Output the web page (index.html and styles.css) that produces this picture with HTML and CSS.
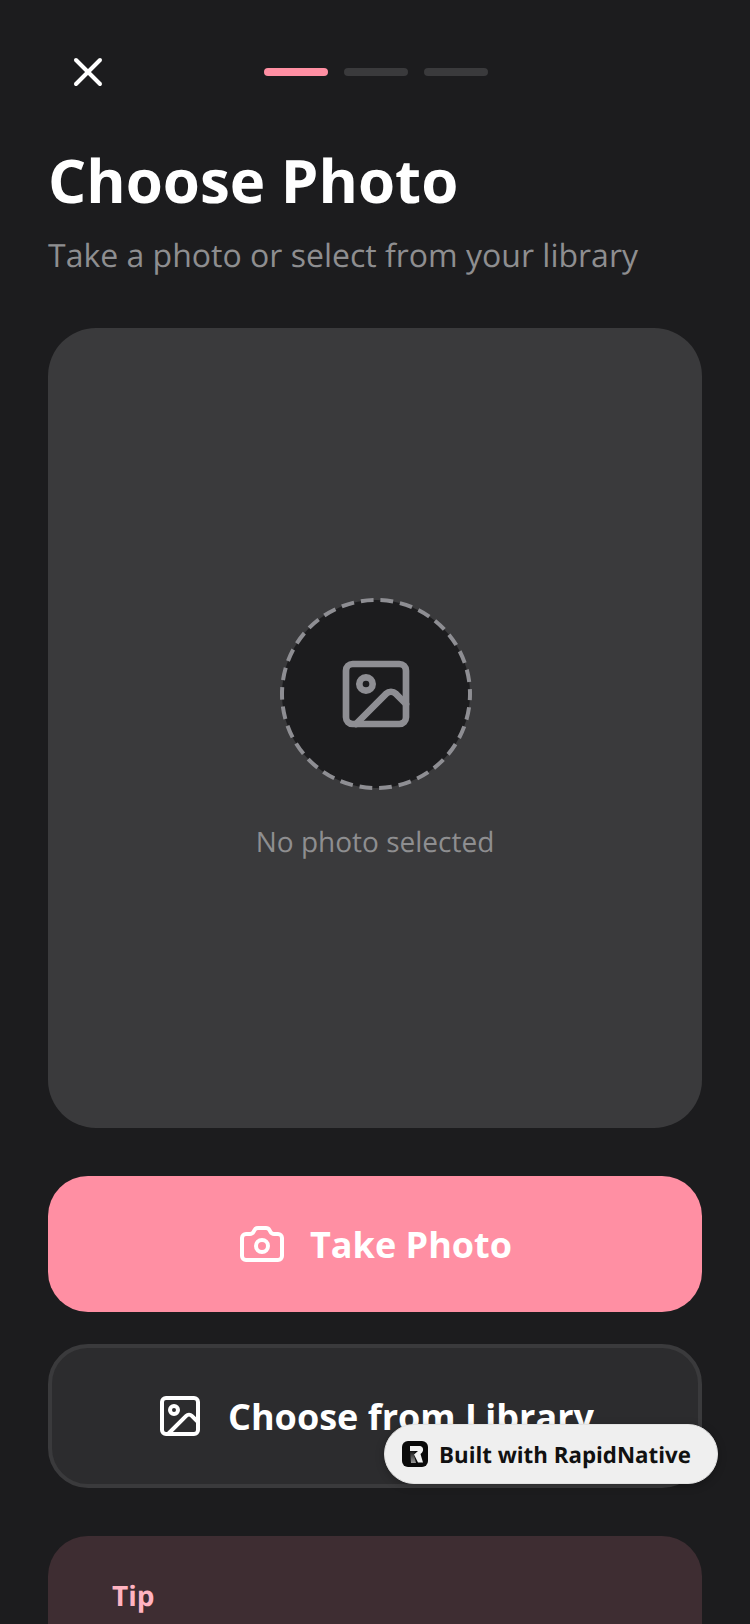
FILE: index.html
```html
<!DOCTYPE html>
<html lang="en">
	<head>
		<meta charset="UTF-8" />
		<meta name="viewport" content="width=device-width, initial-scale=1.0" />
		<title>Choose Photo</title>
		<link rel="stylesheet" href="styles.css">
	</head>

	<body>
		<div id="screen">
			<div class="topBar">
				<button class="closeBtn" aria-label="Close">
					<svg width="48" height="48" viewBox="0 0 24 24" fill="none" stroke="#fff" stroke-width="2" stroke-linecap="round" stroke-linejoin="round">
						<path d="M18 6 6 18" />
						<path d="m6 6 12 12" />
					</svg>
				</button>
				<div class="steps">
					<span class="step active"></span>
					<span class="step"></span>
					<span class="step"></span>
				</div>
			</div>

			<h1 class="title">Choose Photo</h1>
			<p class="subtitle">Take a photo or select from your library</p>

			<div class="preview">
				<svg class="emptyCircle" width="192" height="192" viewBox="0 0 192 192" fill="none">
					<circle cx="96" cy="96" r="94" fill="#1c1c1e" stroke="#8e8e93" stroke-width="4" stroke-dasharray="12.700 7" stroke-dashoffset="6.350" />
					<!-- image icon -->
					<g transform="translate(56 56) scale(3.333)" stroke="#8e8e93" stroke-width="2" stroke-linecap="round" stroke-linejoin="round">
						<rect x="3" y="3" width="18" height="18" rx="2" />
						<circle cx="9" cy="9" r="2" />
						<path d="m21 15-3.086-3.086a2 2 0 0 0-2.828 0L6 21" />
					</g>
				</svg>
				<p class="emptyText">No photo selected</p>
			</div>

			<button class="actionBtn primary">
				<svg width="48" height="48" viewBox="0 0 24 24" fill="none" stroke="#fff" stroke-width="2" stroke-linecap="round" stroke-linejoin="round">
					<path d="M13.997 4a2 2 0 0 1 1.760 1.050l.486.900A2 2 0 0 0 18.003 7H20a2 2 0 0 1 2 2v9a2 2 0 0 1-2 2H4a2 2 0 0 1-2-2V9a2 2 0 0 1 2-2h1.997a2 2 0 0 0 1.759-1.048l.489-.904A2 2 0 0 1 10.004 4z" />
					<circle cx="12" cy="13" r="3" />
				</svg>
				<span>Take Photo</span>
			</button>

			<button class="actionBtn secondary">
				<svg width="48" height="48" viewBox="0 0 24 24" fill="none" stroke="#fff" stroke-width="2" stroke-linecap="round" stroke-linejoin="round">
					<rect x="3" y="3" width="18" height="18" rx="2" />
					<circle cx="9" cy="9" r="2" />
					<path d="m21 15-3.086-3.086a2 2 0 0 0-2.828 0L6 21" />
				</svg>
				<span>Choose from Library</span>
			</button>

			<div class="tipCard">
				<h3 class="tipTitle">Tip</h3>
			</div>

			<div class="builtBadge">
				<svg width="26" height="26" viewBox="0 0 26 26">
					<defs>
						<linearGradient id="stemFade" x1="0" y1="0" x2="0" y2="1">
							<stop offset="0" stop-color="#111" />
							<stop offset="1" stop-color="#999" />
						</linearGradient>
					</defs>
					<rect width="26" height="26" rx="6" fill="#0a0a0a" />
					<path d="M8 10h5l-1 4 2 8H9Z" fill="url(#stemFade)" />
					<path d="M8 5h9c3 0 4.500 2 4 4.500-.3 1.500-1.300 2.800-2.500 3.500l2.500 8.500h-5l-4-8 4-3.500H8Z" fill="#f2f2f2" />
				</svg>
				<span>Built with RapidNative</span>
			</div>
		</div>
	</body>
</html>
```

FILE: styles.css
```css
* {
	margin: 0;
	padding: 0;
	box-sizing: border-box;
}

html, body {
	width: 100%;
	height: 100%;
	overflow: hidden;
}

body {
	background-color: #1c1c1e;
	font-family: "Open Sans", "Noto Sans", sans-serif;
	text-rendering: geometricPrecision;
}

#screen {
	position: relative;
	height: 1624px;
	padding: 48px 48px 0;
	overflow: hidden;
}

.topBar {
	display: grid;
	grid-template-columns: 1fr auto 1fr;
	align-items: center;
	height: 48px;
}

.closeBtn {
	width: 48px;
	height: 48px;
	margin-left: 16px;
	background: none;
	border: none;
}

.steps {
	display: flex;
	gap: 16px;
	margin-left: 2px;
}

.step {
	width: 64px;
	height: 8px;
	border-radius: 4px;
	background-color: #3a3a3c;
}

.step.active {
	background-color: #ff8fa3;
}

.title {
	margin-top: 48px;
	font-size: 60px;
	line-height: 72px;
	font-weight: 700;
	color: #fff;
}

.subtitle {
	margin-top: 16px;
	font-size: 32px;
	line-height: 48px;
	color: #8e8e90;
}

.preview {
	height: 800px;
	margin-top: 48px;
	padding-top: 4px;
	border-radius: 48px;
	background-color: #3a3a3c;
	display: flex;
	flex-direction: column;
	justify-content: center;
	align-items: center;
}

.emptyCircle {
	margin-left: 2px;
}

.emptyText {
	margin-top: 32px;
	font-size: 28px;
	line-height: 40px;
	color: #8e8e90;
}

.actionBtn {
	width: 100%;
	display: flex;
	justify-content: center;
	align-items: center;
	gap: 24px;
	border-radius: 40px;
	font-family: inherit;
	font-size: 36px;
	font-weight: 700;
	color: #fff;
}

.primary {
	height: 136px;
	margin-top: 48px;
	border: none;
	background-color: #ff8fa3;
}

.secondary {
	height: 144px;
	margin-top: 32px;
	border: 4px solid #3a3a3c;
	background-color: #2c2c2e;
}

.tipCard {
	height: 200px;
	margin-top: 48px;
	padding: 40px 64px;
	border-radius: 40px;
	background-color: #3e2d32;
}

.tipTitle {
	font-size: 28px;
	line-height: 40px;
	font-weight: 700;
	color: #ffb3c1;
}

/* floating badge */
.builtBadge {
	position: absolute;
	left: 384px;
	top: 1424px;
	width: 334px;
	height: 60px;
	padding-left: 17px;
	border: 1px solid #e2e2e2;
	border-radius: 30px;
	background-color: #efefef;
	box-shadow: 0 2px 8px rgba(0, 0, 0, 0.25);
	display: flex;
	align-items: center;
	gap: 11px;
	font-size: 22.300px;
	font-weight: 700;
	color: #111;
}
```
